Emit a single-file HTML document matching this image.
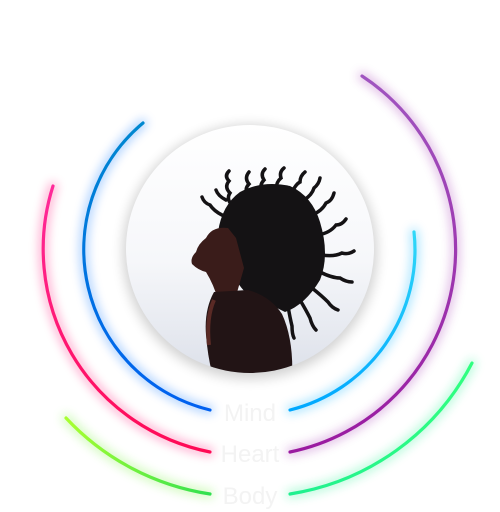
<!DOCTYPE html>
<html><head><meta charset="utf-8"><style>
html,body{margin:0;padding:0;background:#fff;width:500px;height:512px;overflow:hidden}
svg{position:absolute;left:0;top:0}
.t{font-family:"Liberation Sans",sans-serif;font-size:24px;fill:#f3f3f3;text-anchor:middle}
</style></head><body>
<svg width="500" height="512" viewBox="0 0 500 512">
<defs>
<filter id="g" x="-30%" y="-30%" width="160%" height="160%"><feGaussianBlur stdDeviation="5"/></filter>
<filter id="sh" x="-20%" y="-20%" width="140%" height="140%"><feGaussianBlur stdDeviation="6"/></filter>
<linearGradient id="lb" x1="0" y1="1" x2="0" y2="0"><stop offset="0" stop-color="#0060f0"/><stop offset="1" stop-color="#0088d0"/></linearGradient>
<linearGradient id="rc" x1="0" y1="0" x2="0" y2="1"><stop offset="0" stop-color="#30d8f8"/><stop offset="1" stop-color="#00a8ff"/></linearGradient>
<linearGradient id="lp" x1="0" y1="0" x2="0" y2="1"><stop offset="0" stop-color="#ff2a9a"/><stop offset="1" stop-color="#ff0a55"/></linearGradient>
<linearGradient id="rp" x1="0" y1="0" x2="0" y2="1"><stop offset="0" stop-color="#a055c0"/><stop offset="1" stop-color="#9a1aa0"/></linearGradient>
<linearGradient id="lg" x1="0" y1="0" x2="1" y2="0"><stop offset="0" stop-color="#a8ff30"/><stop offset="1" stop-color="#30e050"/></linearGradient>
<linearGradient id="rg" x1="0" y1="0" x2="1" y2="0"><stop offset="0" stop-color="#20f090"/><stop offset="1" stop-color="#30ff80"/></linearGradient>
<linearGradient id="ph" x1="0" y1="0" x2="0" y2="1"><stop offset="0" stop-color="#ffffff"/><stop offset="0.55" stop-color="#f6f7fa"/><stop offset="1" stop-color="#dde1ea"/></linearGradient>
<clipPath id="c"><circle cx="250" cy="249" r="124"/></clipPath>
</defs>
<g fill="none" stroke-linecap="round">
<g filter="url(#g)" opacity="0.35" stroke-width="8">
<path d="M143 123 A165 165 0 0 0 210 410" stroke="#0070ff"/>
<path d="M414 232 A165 165 0 0 1 290 410" stroke="#00b0ff"/>
<path d="M53 186 A207 207 0 0 0 210 452" stroke="#ff0a70"/>
<path d="M362 76 A207 207 0 0 1 290 452" stroke="#a030b0"/>
<path d="M66 418 A248 248 0 0 0 210 494" stroke="#70f030"/>
<path d="M472 363 A248 248 0 0 1 290 494" stroke="#20f090"/>
</g>
<path d="M143 123 A165 165 0 0 0 210 410" stroke="url(#lb)" stroke-width="3.2"/>
<path d="M414 232 A165 165 0 0 1 290 410" stroke="url(#rc)" stroke-width="3.2"/>
<path d="M53 186 A207 207 0 0 0 210 452" stroke="url(#lp)" stroke-width="3.2"/>
<path d="M362 76 A207 207 0 0 1 290 452" stroke="url(#rp)" stroke-width="3.2"/>
<path d="M66 418 A248 248 0 0 0 210 494" stroke="url(#lg)" stroke-width="3.2"/>
<path d="M472 363 A248 248 0 0 1 290 494" stroke="url(#rg)" stroke-width="3.2"/>
</g>
<circle cx="250" cy="252" r="127" fill="#000" opacity="0.18" filter="url(#sh)"/>
<circle cx="250" cy="249" r="124" fill="url(#ph)"/>
<g clip-path="url(#c)">
<path d="M218 232 Q222 205 240 192 Q262 180 290 186 Q312 196 320 222 Q330 255 320 280 Q305 305 285 312 L245 292 Q225 270 218 232 Z" fill="#141214"/>
<g stroke="#141214" stroke-width="3.5" fill="none" stroke-linecap="round">
<path d="M232 205 q-6 -6 -2 -12 q-6 -6 -1 -12 q-5 -5 0 -10"/>
<path d="M248 195 q-4 -6 1 -11 q-5 -6 0 -12"/>
<path d="M262 192 q-3 -7 2 -12 q-4 -6 1 -11"/>
<path d="M276 190 q0 -8 5 -12 q-2 -6 3 -10"/>
<path d="M292 192 q4 -8 8 -10 q0 -6 5 -10"/>
<path d="M304 200 q8 -5 10 -12 q5 -4 6 -10"/>
<path d="M312 215 q10 -4 14 -12 q6 -2 8 -10"/>
<path d="M318 235 q12 -2 18 -10 q6 0 10 -6"/>
<path d="M322 255 q12 2 20 -2 q6 2 12 -2"/>
<path d="M320 272 q12 6 20 6 q6 4 12 4"/>
<path d="M312 288 q10 8 16 14 q4 6 10 8"/>
<path d="M300 300 q6 10 10 18 q2 8 6 12"/>
<path d="M288 306 q2 12 4 20 q0 8 2 12"/>
<path d="M222 215 q-8 -4 -12 -10 q-6 -2 -8 -8"/>
<path d="M226 200 q-8 -4 -10 -10"/>
</g>
<path d="M228 228 Q212 226 206 238 Q198 244 196 252 Q190 258 192 264 Q198 270 206 272 Q214 285 218 300 L236 296 L244 268 L236 238 Z" fill="#3a1c1a"/>
<path d="M214 292 Q204 310 206 335 Q208 360 214 380 L292 380 Q294 340 282 314 Q270 296 248 290 Z" fill="#221415"/>
<path d="M214 300 Q206 318 209 345" stroke="#5a2a25" stroke-width="4" fill="none"/>
</g>
<text class="t" x="250" y="421">Mind</text>
<text class="t" x="250" y="462">Heart</text>
<text class="t" x="250" y="504">Body</text>
</svg>
</body></html>
